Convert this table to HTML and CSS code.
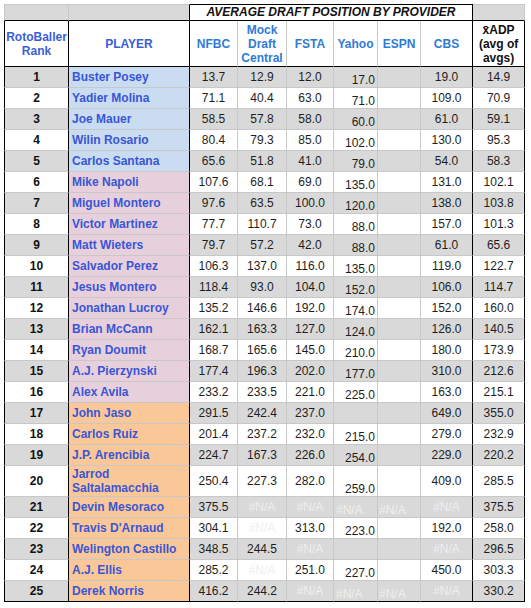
FILE: index.html
```html
<!DOCTYPE html>
<html>
<head>
<meta charset="utf-8">
<link rel="stylesheet" href="styles.css">
</head>
<body>
<table class="sheet">
<colgroup>
<col class="c-rank"><col class="c-name"><col class="c-nfbc"><col class="c-mock"><col class="c-fsta"><col class="c-yh"><col class="c-es"><col class="c-cbs"><col class="c-avg">
</colgroup>
<tr class="trow">
<td class="tl first"></td><td class="tl mid"></td><td class="title" colspan="6">AVERAGE DRAFT POSITION BY PROVIDER</td><td class="tl last"></td>
</tr>
<tr class="hrow">
<td class="rank hb">RotoBaller<br>Rank</td>
<td class="name hb hn">PLAYER</td>
<td class="hb hp">NFBC</td>
<td class="hb hp">Mock<br>Draft<br>Central</td>
<td class="hb hp">FSTA</td>
<td class="hb hp">Yahoo</td>
<td class="hb hp">ESPN</td>
<td class="hb hp cbs">CBS</td>
<td class="hb avg">x̄ADP<br>(avg of<br>avgs)</td>
</tr>
<tr class="g"><td class="rank">1</td><td class="name bl">Buster Posey</td><td>13.7</td><td>12.9</td><td>12.0</td><td class="yh">17.0</td><td class="es"></td><td class="cbs">19.0</td><td class="avg">14.9</td></tr>
<tr><td class="rank">2</td><td class="name bl">Yadier Molina</td><td>71.1</td><td>40.4</td><td>63.0</td><td class="yh">71.0</td><td class="es"></td><td class="cbs">109.0</td><td class="avg">70.9</td></tr>
<tr class="g"><td class="rank">3</td><td class="name bl">Joe Mauer</td><td>58.5</td><td>57.8</td><td>58.0</td><td class="yh">60.0</td><td class="es"></td><td class="cbs">61.0</td><td class="avg">59.1</td></tr>
<tr><td class="rank">4</td><td class="name bl">Wilin Rosario</td><td>80.4</td><td>79.3</td><td>85.0</td><td class="yh">102.0</td><td class="es"></td><td class="cbs">130.0</td><td class="avg">95.3</td></tr>
<tr class="g"><td class="rank">5</td><td class="name bl">Carlos Santana</td><td>65.6</td><td>51.8</td><td>41.0</td><td class="yh">79.0</td><td class="es"></td><td class="cbs">54.0</td><td class="avg">58.3</td></tr>
<tr><td class="rank">6</td><td class="name pk">Mike Napoli</td><td>107.6</td><td>68.1</td><td>69.0</td><td class="yh">135.0</td><td class="es"></td><td class="cbs">131.0</td><td class="avg">102.1</td></tr>
<tr class="g"><td class="rank">7</td><td class="name pk">Miguel Montero</td><td>97.6</td><td>63.5</td><td>100.0</td><td class="yh">120.0</td><td class="es"></td><td class="cbs">138.0</td><td class="avg">103.8</td></tr>
<tr><td class="rank">8</td><td class="name pk">Victor Martinez</td><td>77.7</td><td>110.7</td><td>73.0</td><td class="yh">88.0</td><td class="es"></td><td class="cbs">157.0</td><td class="avg">101.3</td></tr>
<tr class="g"><td class="rank">9</td><td class="name pk">Matt Wieters</td><td>79.7</td><td>57.2</td><td>42.0</td><td class="yh">88.0</td><td class="es"></td><td class="cbs">61.0</td><td class="avg">65.6</td></tr>
<tr><td class="rank">10</td><td class="name pk">Salvador Perez</td><td>106.3</td><td>137.0</td><td>116.0</td><td class="yh">135.0</td><td class="es"></td><td class="cbs">119.0</td><td class="avg">122.7</td></tr>
<tr class="g"><td class="rank">11</td><td class="name pk">Jesus Montero</td><td>118.4</td><td>93.0</td><td>104.0</td><td class="yh">152.0</td><td class="es"></td><td class="cbs">106.0</td><td class="avg">114.7</td></tr>
<tr><td class="rank">12</td><td class="name pk">Jonathan Lucroy</td><td>135.2</td><td>146.6</td><td>192.0</td><td class="yh">174.0</td><td class="es"></td><td class="cbs">152.0</td><td class="avg">160.0</td></tr>
<tr class="g"><td class="rank">13</td><td class="name pk">Brian McCann</td><td>162.1</td><td>163.3</td><td>127.0</td><td class="yh">124.0</td><td class="es"></td><td class="cbs">126.0</td><td class="avg">140.5</td></tr>
<tr><td class="rank">14</td><td class="name pk">Ryan Doumit</td><td>168.7</td><td>165.6</td><td>145.0</td><td class="yh">210.0</td><td class="es"></td><td class="cbs">180.0</td><td class="avg">173.9</td></tr>
<tr class="g"><td class="rank">15</td><td class="name pk">A.J. Pierzynski</td><td>177.4</td><td>196.3</td><td>202.0</td><td class="yh">177.0</td><td class="es"></td><td class="cbs">310.0</td><td class="avg">212.6</td></tr>
<tr><td class="rank">16</td><td class="name pk">Alex Avila</td><td>233.2</td><td>233.5</td><td>221.0</td><td class="yh">225.0</td><td class="es"></td><td class="cbs">163.0</td><td class="avg">215.1</td></tr>
<tr class="g"><td class="rank">17</td><td class="name or">John Jaso</td><td>291.5</td><td>242.4</td><td>237.0</td><td class="yh"></td><td class="es"></td><td class="cbs">649.0</td><td class="avg">355.0</td></tr>
<tr><td class="rank">18</td><td class="name or">Carlos Ruiz</td><td>201.4</td><td>237.2</td><td>232.0</td><td class="yh">215.0</td><td class="es"></td><td class="cbs">279.0</td><td class="avg">232.9</td></tr>
<tr class="g"><td class="rank">19</td><td class="name or">J.P. Arencibia</td><td>224.7</td><td>167.3</td><td>226.0</td><td class="yh">254.0</td><td class="es"></td><td class="cbs">229.0</td><td class="avg">220.2</td></tr>
<tr class="tall"><td class="rank">20</td><td class="name or">Jarrod<br>Saltalamacchia</td><td>250.4</td><td>227.3</td><td>282.0</td><td class="yh">259.0</td><td class="es"></td><td class="cbs">409.0</td><td class="avg">285.5</td></tr>
<tr class="g"><td class="rank">21</td><td class="name or">Devin Mesoraco</td><td>375.5</td><td class="na">#N/A</td><td class="na">#N/A</td><td class="yh na tx">#N/A</td><td class="es na">#N/A</td><td class="cbs na">#N/A</td><td class="avg">375.5</td></tr>
<tr><td class="rank">22</td><td class="name or">Travis D'Arnaud</td><td>304.1</td><td class="na">#N/A</td><td>313.0</td><td class="yh">223.0</td><td class="es"></td><td class="cbs">192.0</td><td class="avg">258.0</td></tr>
<tr class="g"><td class="rank">23</td><td class="name or">Welington Castillo</td><td>348.5</td><td>244.5</td><td class="na">#N/A</td><td class="yh"></td><td class="es"></td><td class="cbs na">#N/A</td><td class="avg">296.5</td></tr>
<tr><td class="rank">24</td><td class="name or">A.J. Ellis</td><td>285.2</td><td class="na">#N/A</td><td>251.0</td><td class="yh">227.0</td><td class="es"></td><td class="cbs">450.0</td><td class="avg">303.3</td></tr>
<tr class="g end"><td class="rank">25</td><td class="name or">Derek Norris</td><td>416.2</td><td>244.2</td><td class="na">#N/A</td><td class="yh na tx">#N/A</td><td class="es na">#N/A</td><td class="cbs na">#N/A</td><td class="avg">330.2</td></tr>
</table>
</body>
</html>
```

FILE: styles.css
```css
html, body {
  margin: 0;
  padding: 0;
  background: #ffffff;
}

.sheet {
  margin: 4px 0 0 4px;
  border-collapse: separate;
  border-spacing: 0;
  table-layout: fixed;
  width: 521px;
  font-family: "Liberation Sans", Arial, sans-serif;
  font-size: 12px;
  line-height: 14px;
  color: #1e1e1e;
}

.c-rank { width: 65px; }
.c-name { width: 121px; }
.c-nfbc { width: 48px; }
.c-mock { width: 49px; }
.c-fsta { width: 47px; }
.c-yh { width: 44px; }
.c-es { width: 43px; }
.c-cbs { width: 52px; }
.c-avg { width: 52px; }

.sheet td {
  padding: 0;
  border-right: 1px solid #c8c8c8;
  border-bottom: 1px solid #c8c8c8;
  text-align: center;
  vertical-align: middle;
  white-space: nowrap;
  overflow: hidden;
}

.sheet tr { height: 21px; }
.sheet tr.trow { height: 17px; }
.sheet tr.hrow { height: 46px; }
.sheet tr.tall { height: 31px; }

/* title row */
.sheet td.tl {
  background: #d9d9d9;
  border-top: 1px solid #c8c8c8;
  border-bottom: 1px solid #000;
}
.sheet td.tl.first { border-left: 1px solid #c8c8c8; }
.sheet td.tl.mid { border-right: 1px solid #000; }
.sheet td.title {
  background: #fff;
  border-top: 1px solid #000;
  border-right: 1px solid #000;
  border-bottom: 1px solid #000;
  font-weight: bold;
  font-style: italic;
  color: #111;
  line-height: 15px;
}

/* data */
.sheet td.rank {
  border-left: 1px solid #000;
  border-right: 1px solid #000;
  font-weight: bold;
  color: #111;
}
.sheet td.name {
  border-right: 1px solid #000;
  text-align: left;
  padding-left: 3px;
  font-weight: bold;
  color: #3a56d4;
}
.sheet td.cbs { border-right: 1px solid #000; }
.sheet td.avg { border-right: 1px solid #000; }

/* header row */
.sheet tr.hrow td.hb {
  border-bottom: 1px solid #000;
  font-weight: bold;
  background: #fff;
}
.sheet tr.hrow td.rank { color: #3a5ed8; padding-top: 1px; }
.sheet tr.hrow td.hn { color: #3a5ed8; text-align: center; padding-left: 0; }
.sheet tr.hrow td.hp { color: #2f7ad6; }
.sheet tr.hrow td.avg { color: #111; padding-top: 1px; }

.sheet tr.g td { background: #d9d9d9; }
.sheet tr td.bl { background: #c9dcf1; }
.sheet tr td.pk { background: #e7d0dc; }
.sheet tr td.or { background: #fac898; }

.sheet td.yh {
  text-align: right;
  vertical-align: bottom;
  padding-right: 2px;
}
.sheet td.es {
  text-align: left;
  vertical-align: bottom;
  padding-left: 1px;
}
.sheet td.yh.tx {
  text-align: left;
  padding-left: 2px;
  padding-right: 0;
}
.sheet td.na { color: #efefef; }

.sheet tr.end td { border-bottom: 1px solid #000; }
```
